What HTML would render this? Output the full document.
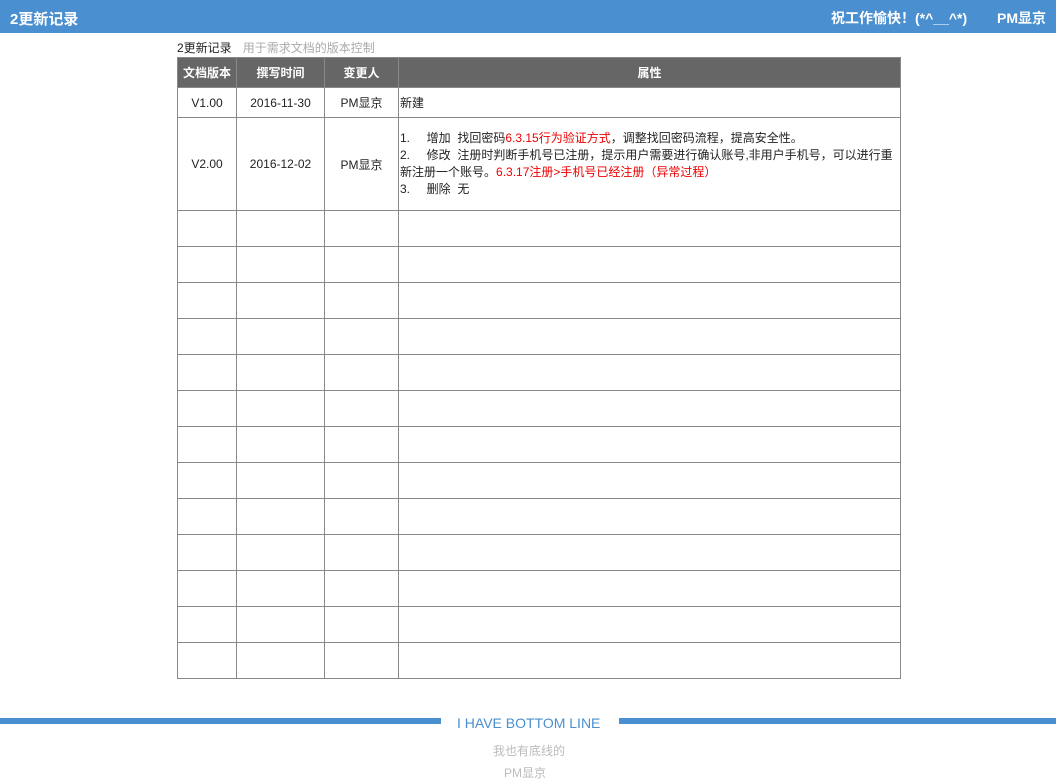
<!DOCTYPE html><html><head><meta charset="utf-8"><style>
*{margin:0;padding:0;box-sizing:border-box}
body{width:1056px;height:780px;background:#fff;font-family:"Liberation Sans","Noto Sans CJK SC",sans-serif;position:relative;overflow:hidden}
.hd{position:absolute;left:0;top:0;width:1056px;height:33px;background:#4a8fcf;color:#fff;font-weight:bold;font-size:15px}
.hd .l{position:absolute;left:10px;top:8px}
.hd .r1{position:absolute;left:831px;top:8px;font-size:14px}
.hd .r2{position:absolute;left:997px;top:8px;font-size:14px}
.sub{position:absolute;left:177px;top:39px;font-size:12px;color:#222}
.sub span{color:#aaa;margin-left:11px}
table{position:absolute;left:177px;top:57px;width:724px;border-collapse:collapse;font-size:12px;color:#222}
td,th{border:1px solid #888;text-align:center;padding:0}
th{background:#666;color:#fff;font-weight:bold;height:30px}
td.t{text-align:left;padding-left:1px}
.r{color:#e00}
.e td{height:36px}
.bl{position:absolute;top:718px;height:6px;background:#4a8fcf}
.bt{position:absolute;left:457px;top:715px;font-size:14px;color:#4a8fcf}
.g{position:absolute;font-size:12px;color:#bbb}
</style></head><body>
<div class="hd"><span class="l">2更新记录</span><span class="r1">祝工作愉快！(*^__^*)</span><span class="r2">PM显京</span></div>
<div class="sub">2更新记录<span>用于需求文档的版本控制</span></div>
<table>
<tr><th style="width:59px">文档版本</th><th style="width:88px">撰写时间</th><th style="width:74px">变更人</th><th>属性</th></tr>
<tr style="height:30px"><td>V1.00</td><td>2016-11-30</td><td>PM显京</td><td class="t">新建</td></tr>
<tr style="height:93px"><td>V2.00</td><td>2016-12-02</td><td>PM显京</td><td class="t" style="line-height:17px;font-size:12px;padding-right:0">1.&nbsp;&nbsp;&nbsp;&nbsp;&nbsp;增加&nbsp;&nbsp;找回密码<span class="r">6.3.15行为验证方式</span>，调整找回密码流程，提高安全性。<br>2.&nbsp;&nbsp;&nbsp;&nbsp;&nbsp;修改&nbsp;&nbsp;注册时判断手机号已注册，提示用户需要进行确认账号,非用户手机号，可以进行重新注册一个账号。<span class="r">6.3.17注册&gt;手机号已经注册（异常过程）</span><br>3.&nbsp;&nbsp;&nbsp;&nbsp;&nbsp;删除&nbsp;&nbsp;无</td></tr>
<tr class="e"><td></td><td></td><td></td><td></td></tr>
<tr class="e"><td></td><td></td><td></td><td></td></tr>
<tr class="e"><td></td><td></td><td></td><td></td></tr>
<tr class="e"><td></td><td></td><td></td><td></td></tr>
<tr class="e"><td></td><td></td><td></td><td></td></tr>
<tr class="e"><td></td><td></td><td></td><td></td></tr>
<tr class="e"><td></td><td></td><td></td><td></td></tr>
<tr class="e"><td></td><td></td><td></td><td></td></tr>
<tr class="e"><td></td><td></td><td></td><td></td></tr>
<tr class="e"><td></td><td></td><td></td><td></td></tr>
<tr class="e"><td></td><td></td><td></td><td></td></tr>
<tr class="e"><td></td><td></td><td></td><td></td></tr>
<tr class="e"><td></td><td></td><td></td><td></td></tr>
</table>
<div class="bl" style="left:0;width:441px"></div>
<div class="bl" style="left:619px;width:437px"></div>
<div class="bt">I HAVE BOTTOM LINE</div>
<div class="g" style="left:493px;top:742px">我也有底线的</div>
<div class="g" style="left:504px;top:764px">PM显京</div>
</body></html>
